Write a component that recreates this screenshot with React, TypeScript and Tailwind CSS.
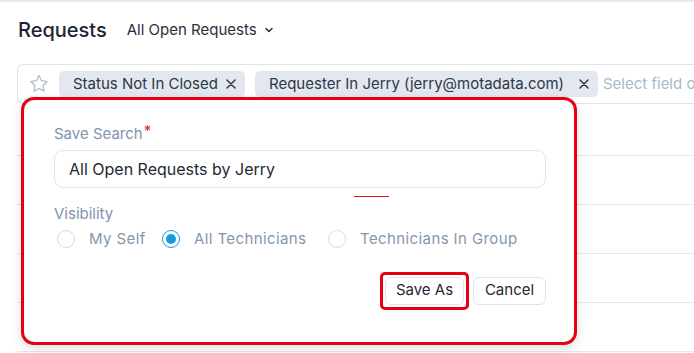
import React from "react";

const Star = () => (
  <svg className="shrink-0" width="22" height="22" viewBox="0 0 24 24" fill="none" stroke="#a9b9cf" strokeWidth="1.3" strokeLinejoin="round">
    <path d="M12 2.8l2.75 5.6 6.15.9-4.45 4.35 1.05 6.12L12 16.9l-5.5 2.87 1.05-6.12L3.1 9.3l6.15-.9z" />
  </svg>
);

const X = () => (
  <svg className="shrink-0" width="10" height="10" viewBox="0 0 10 10" stroke="#2d3748" strokeWidth="1.5" strokeLinecap="round">
    <path d="M1 1l8 8M9 1l-8 8" />
  </svg>
);

const Radio = ({ checked, label, w }: { checked?: boolean; label: string; w: string }) => (
  <div className={`flex items-center gap-[14px] shrink-0 ${w}`}>
    {checked ? (
      <span className="w-[18px] h-[18px] rounded-full border-[1.5px] border-[#139ddc] flex items-center justify-center shrink-0">
        <span className="w-[10px] h-[10px] rounded-full bg-[#139ddc]" />
      </span>
    ) : (
      <span className="w-[18px] h-[18px] rounded-full border border-[#d6dce4] shrink-0" />
    )}
    <span className="text-[15px] tracking-[0.4px] text-[#8596ac] whitespace-nowrap">{label}</span>
  </div>
);

export default function App() {
  return (
    <div
      className="relative w-[694px] h-[353px] overflow-hidden bg-white border-t-2 border-[#e6eaf0]"
      style={{ fontFamily: "Inter, 'Open Sans', sans-serif" }}
    >
      <div className="flex items-center h-[58px] pl-[18px] pb-[2px]">
        <span className="text-[20px] font-medium text-[#1d2433]">Requests</span>
        <span className="ml-[20px] text-[15px] text-[#2a2f3a] flex items-center gap-[7px]">
          All Open Requests
          <svg width="10" height="10" viewBox="0 0 10 10" fill="none" stroke="#2a2f3a" strokeWidth="1.5" strokeLinecap="round" strokeLinejoin="round">
            <path d="M2 3.5l3 3 3-3" />
          </svg>
        </span>
      </div>
      <div className="mt-[4px] ml-[17px] h-[40px] border border-r-0 border-[#dfe4ec] rounded-l-[6px] flex items-center pl-[10px] whitespace-nowrap overflow-hidden">
        <Star />
        <div className="ml-[9px] h-[26px] w-[186px] shrink-0 bg-[#e3e8f0] rounded-[5px] flex items-center justify-between pl-[14px] pr-[9px] text-[15px] text-[#2d3748]">
          Status Not In Closed <X />
        </div>
        <div className="ml-[10px] h-[26px] w-[343px] shrink-0 bg-[#e3e8f0] rounded-[5px] flex items-center justify-between pl-[14px] pr-[9px] text-[15px] text-[#2d3748]">
          Requester In Jerry (jerry@motadata.com) <X />
        </div>
        <span className="ml-[5px] shrink-0 text-[15px] text-[#a9b9cd]">Select field or value</span>
      </div>
      <div className="ml-[17px] flex flex-col">
        <div className="h-[52px] border-b border-[#e3e8ef]" />
        <div className="h-[49px] border-b border-[#e3e8ef]" />
        <div className="h-[49px] border-b border-[#e3e8ef]" />
        <div className="h-[49px] border-b border-[#e3e8ef]" />
        <div className="h-[49px] border-b border-[#e3e8ef]" />
      </div>

      <div className="absolute left-[21px] top-[95px] w-[556px] h-[248px] bg-white rounded-[13px] border-[3px] border-[#e60012] shadow-[0_4px_12px_rgba(0,0,0,0.12)] pl-[30px] pr-[28px] pt-[23px]">
        <div className="text-[15px] text-[#8094ad] flex items-start">
          Save Search<span className="text-[#e5202a] ml-[1px] leading-none">*</span>
        </div>
        <div className="mt-[4px] h-[38px] border border-[#dfe4ec] rounded-[9px] flex items-center pl-[14px] text-[16px] text-[#232833]">
          All Open Requests by Jerry
        </div>
        <div className="mt-[8px] ml-[300px] w-[35px] h-[1px] bg-[#e8101a]" />
        <div className="mt-[6px] text-[15px] text-[#8094ad]">Visibility</div>
        <div className="mt-[3px] ml-[3px] flex items-center">
          <Radio label="My Self" w="w-[105px]" />
          <Radio checked label="All Technicians" w="w-[166px]" />
          <Radio label="Technicians In Group" w="w-[200px]" />
        </div>
        <div className="mt-[21px] flex justify-end items-center gap-[4px]">
          <span className="border-[3px] border-[#e60012] rounded-[5px] p-[2px]">
            <button className="h-[28px] w-[79px] border border-[#dfe4ec] rounded-[6px] text-[15px] text-[#232833] bg-white">
              Save As
            </button>
          </span>
          <button className="h-[28px] w-[73px] border border-[#dfe4ec] rounded-[6px] text-[15px] text-[#232833] bg-white">
            Cancel
          </button>
        </div>
      </div>
    </div>
  );
}
